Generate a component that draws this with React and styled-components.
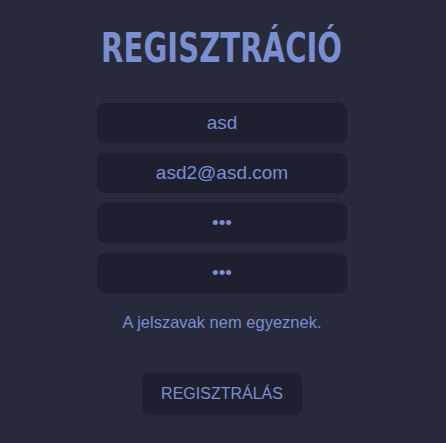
import React from 'react';
import styled, { createGlobalStyle } from 'styled-components';

const GlobalStyle = createGlobalStyle`
  html, body {
    margin: 0;
    padding: 0;
    background: #262a3b;
  }
  body {
    font-family: "Liberation Sans", Arial, sans-serif;
  }
`;

const Page = styled.div`
  min-height: 443px;
  padding-right: 2px;
  display: flex;
  flex-direction: column;
  align-items: center;
  background: #262a3b;
`;

const Title = styled.h1`
  margin: 25px 0 0;
  font-family: "DejaVu Sans Condensed", "DejaVu Sans", sans-serif;
  font-weight: 700;
  font-size: 41px;
  line-height: 46px;
  color: #7b8ecf;
  transform: scaleX(0.79);
`;

const Form = styled.form`
  margin-top: 32px;
  width: 250px;
  display: flex;
  flex-direction: column;
  gap: 10px;
`;

const Input = styled.input`
  box-sizing: border-box;
  width: 100%;
  height: 40px;
  border: none;
  outline: none;
  border-radius: 8px;
  background: #1e2030;
  color: #7b8ecf;
  text-align: center;
  font-family: "Liberation Sans", Arial, sans-serif;
  font-size: 19px;
`;

const ErrorText = styled.p`
  margin: 10px 0 0;
  text-align: center;
  font-size: 16.5px;
  color: #7b8ecf;
`;

const Button = styled.button`
  margin-top: 41px;
  width: 160px;
  height: 42px;
  border: none;
  border-radius: 8px;
  background: #1e2030;
  color: #7b8ecf;
  font-family: "Liberation Sans", Arial, sans-serif;
  font-size: 16px;
`;

const App = () => (
  <Page>
    <GlobalStyle />
    <Title>REGISZTRÁCIÓ</Title>
    <Form onSubmit={(e) => e.preventDefault()}>
      <Input type="text" defaultValue="asd" />
      <Input type="email" defaultValue="asd2@asd.com" />
      <Input type="password" defaultValue="asd" />
      <Input type="password" defaultValue="asd" />
      <ErrorText>A jelszavak nem egyeznek.</ErrorText>
    </Form>
    <Button type="button">REGISZTRÁLÁS</Button>
  </Page>
);

export default App;
